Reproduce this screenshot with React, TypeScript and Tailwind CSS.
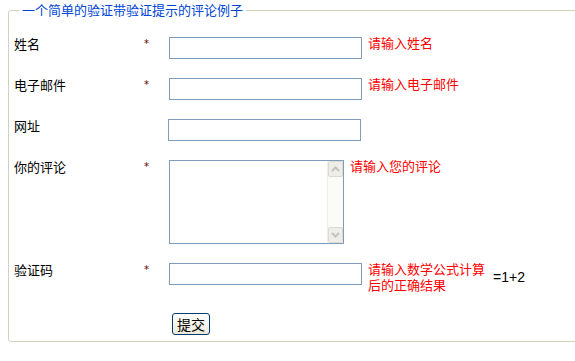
import React from 'react';

const cjk = "font-['Noto_Sans_CJK_SC','Noto_Sans',sans-serif]";

function Star() {
  return (
    <span className="w-[25px] shrink-0 font-['DejaVu_Sans',sans-serif] text-[10px] leading-[14px] text-[#5a0000]">*</span>
  );
}

function Label({ text }: { text: string }) {
  return <span className="w-[130px] shrink-0 -mt-[1px] leading-[16px] text-black">{text}</span>;
}

function Field({ className = '' }: { className?: string }) {
  return (
    <input
      type="text"
      className={`w-[193px] h-[22px] shrink-0 border border-[#7f9db9] bg-white outline-none px-1 text-[13px] ${className}`}
    />
  );
}

function Hint({ text, className = '' }: { text: string; className?: string }) {
  return <span className={`ml-[6px] -mt-[2px] leading-[16px] text-[#ff0000] ${className}`}>{text}</span>;
}

function Arrow({ up }: { up?: boolean }) {
  return (
    <div className="h-[16px] w-[15px] rounded-[2px] border border-[#dcdbd3] bg-[#eeede8] flex items-center justify-center">
      <svg width="9" height="6" viewBox="0 0 9 6">
        <path d={up ? 'M1 5 L4.5 1.5 L8 5' : 'M1 1 L4.5 4.5 L8 1'} fill="none" stroke="#c5c4bc" strokeWidth="2" />
      </svg>
    </div>
  );
}

export default function App() {
  return (
    <div className={`w-[575px] h-[361px] bg-white overflow-hidden pt-[2px] pl-[8px] ${cjk} text-[13px]`}>
      <fieldset className="w-[640px] border border-[#d0d0bf] rounded-[3px] p-0">
        <legend className="ml-[10px] px-[3px] leading-[16px] text-[#0046d5]">一个简单的验证带验证提示的评论例子</legend>
        <div className="pl-[5px] pt-[19px] flex flex-col">
          <div className="flex items-start h-[41px]">
            <Label text="姓名" />
            <Star />
            <Field />
            <Hint text="请输入姓名" />
          </div>
          <div className="flex items-start h-[41px]">
            <Label text="电子邮件" />
            <Star />
            <Field />
            <Hint text="请输入电子邮件" />
          </div>
          <div className="flex items-start h-[41px]">
            <Label text="网址" />
            <span className="w-[24px] shrink-0" />
            <Field />
          </div>
          <div className="flex items-start h-[103px]">
            <Label text="你的评论" />
            <Star />
            <div className="w-[175px] h-[84px] shrink-0 border border-[#7f9db9] bg-white flex">
              <textarea className="flex-1 resize-none outline-none text-[13px] p-1" />
              <div className="w-[16px] h-full bg-[#fbfbf7] border-l border-[#efeee7] flex flex-col justify-between">
                <Arrow up />
                <Arrow />
              </div>
            </div>
            <Hint text="请输入您的评论" />
          </div>
          <div className="flex items-start h-[50px]">
            <Label text="验证码" />
            <Star />
            <Field />
            <div className="flex items-center -mt-[2px]">
              <Hint text="请输入数学公式计算后的正确结果" className="w-[120px] mt-0" />
              <span className="ml-[5px] font-['Liberation_Sans',sans-serif] text-[14px] text-black">=1+2</span>
            </div>
          </div>
          <div className="flex items-start h-[28px]">
            <button className="ml-[158px] w-[38px] h-[22px] rounded-[3px] border border-[#003c74] bg-gradient-to-b from-white to-[#ece9d8] text-[14px] leading-[18px] text-black">
              提交
            </button>
          </div>
        </div>
      </fieldset>
    </div>
  );
}
